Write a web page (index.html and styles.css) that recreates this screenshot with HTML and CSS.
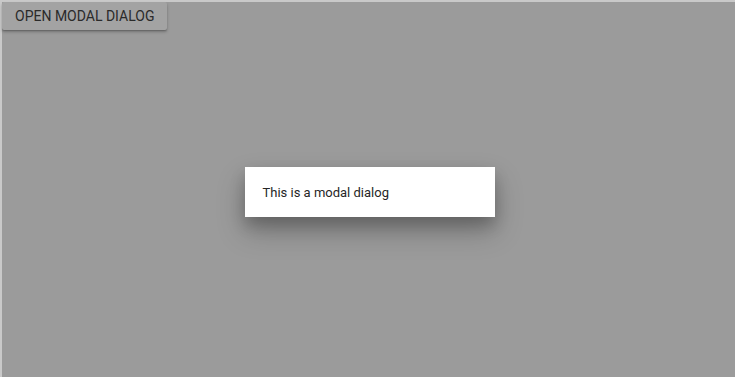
FILE: index.html
```html
<!DOCTYPE html>
<html>
<head>
<meta charset="utf-8">
<link rel="stylesheet" href="styles.css">
</head>
<body>
<div class="frame">
  <div class="page">
    <button class="open-btn">Open modal dialog</button>
    <div class="backdrop">
      <div class="dialog">This is a modal dialog</div>
    </div>
  </div>
</div>
</body>
</html>
```
FILE: styles.css
```css
html, body {
  margin: 0;
  padding: 0;
  height: 100%;
}
body {
  background: #c9c9c9;
  font-family: Roboto, "Liberation Sans", sans-serif;
}
.frame {
  height: 100%;
  box-sizing: border-box;
  padding: 2px 0 0 2px;
}
.page {
  position: relative;
  height: 100%;
  background: #9b9b9b;
}
.open-btn {
  display: block;
  margin: 0;
  height: 28px;
  padding: 0 13px 0 13px;
  border: none;
  border-radius: 2px;
  background: #a3a3a3;
  color: #2a2a2a;
  font-family: Roboto, "Liberation Sans", sans-serif;
  font-size: 14px;
  text-transform: uppercase;
  box-shadow: 0 2px 3px rgba(0, 0, 0, 0.25), 0 1px 1px rgba(0, 0, 0, 0.15);
}
.backdrop {
  position: absolute;
  inset: 0;
  display: flex;
  align-items: center;
  justify-content: center;
}
.dialog {
  width: 250px;
  height: 50px;
  box-sizing: border-box;
  padding: 0 18px;
  display: flex;
  align-items: center;
  margin: 5px 0 0 2px;
  background: #ffffff;
  color: #262626;
  font-size: 13px;
  box-shadow: 0 14px 28px rgba(0, 0, 0, 0.25), 0 8px 14px rgba(0, 0, 0, 0.18);
}
```
